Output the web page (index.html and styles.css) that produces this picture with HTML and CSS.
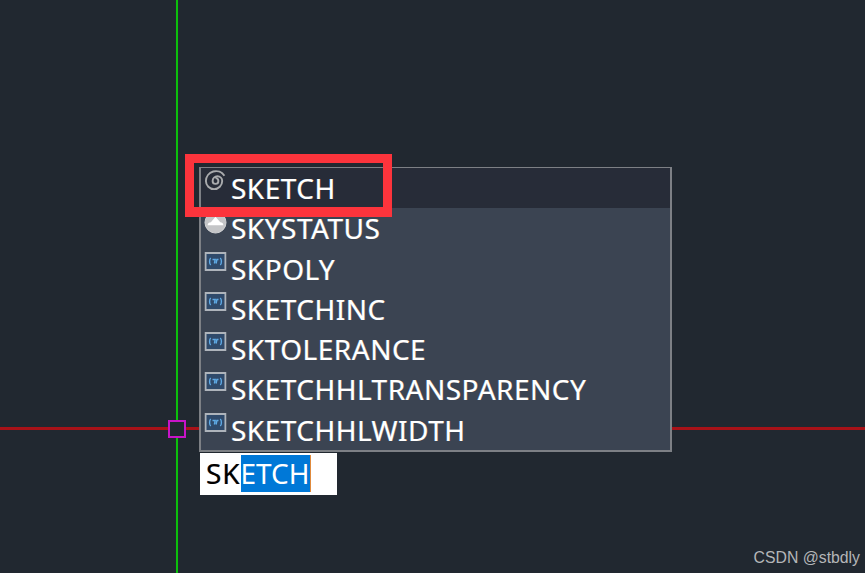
FILE: index.html
```html
<!DOCTYPE html>
<html lang="en">

<head>
    <meta charset="UTF-8">
    <title>SKETCH</title>
    <link rel="stylesheet" href="styles.css">
</head>

<body>
    <div class="canvas">
        <div class="axis-x"></div>
        <div class="axis-y"></div>
        <div class="pickbox"></div>

        <ul class="suggest">
            <li class="suggest-row active">
                <svg class="icon icon-spiral" viewBox="0 0 24 24"><path d="M12 9.500A3 3 0 0 1 15 12.500A3 3 0 0 1 9 12.500A5 5 0 0 1 19 12.500A8.500 8.500 0 0 1 2 12.500A10.500 10.500 0 0 1 21.300 7" fill="none" stroke="#a9abad" stroke-width="2"/></svg>
                <span>SKETCH</span>
            </li>
            <li class="suggest-row">
                <svg class="icon icon-cloud" viewBox="0 0 24 24"><circle cx="12" cy="12" r="11" fill="#c4c5c7" stroke="#d4d5d6" stroke-width="1"/><path d="M3.800 14.800c0-1.900 1.500-3.100 3.400-3.100L12 6l5 5.700c1.800 0 3.200 1.200 3.200 3.100z" fill="#ffffff"/></svg>
                <span>SKYSTATUS</span>
            </li>
            <li class="suggest-row">
                <svg class="icon icon-var" viewBox="0 0 22 19"><use href="#var-icon"/></svg>
                <span>SKPOLY</span>
            </li>
            <li class="suggest-row">
                <svg class="icon icon-var" viewBox="0 0 22 19"><use href="#var-icon"/></svg>
                <span>SKETCHINC</span>
            </li>
            <li class="suggest-row">
                <svg class="icon icon-var" viewBox="0 0 22 19"><use href="#var-icon"/></svg>
                <span>SKTOLERANCE</span>
            </li>
            <li class="suggest-row">
                <svg class="icon icon-var" viewBox="0 0 22 19"><use href="#var-icon"/></svg>
                <span>SKETCHHLTRANSPARENCY</span>
            </li>
            <li class="suggest-row">
                <svg class="icon icon-var" viewBox="0 0 22 19"><use href="#var-icon"/></svg>
                <span>SKETCHHLWIDTH</span>
            </li>
        </ul>

        <div class="highlight-box"></div>

        <div class="cmd-input"><span class="typed">SK</span><span class="selected">ETCH</span></div>

        <div class="watermark">CSDN @stbdly</div>
    </div>

    <svg class="defs" width="0" height="0">
        <symbol id="var-icon" viewBox="0 0 22 19">
            <rect x="1" y="1" width="20" height="17" fill="#2f4a6b" stroke="#aeb4bb" stroke-width="2"/>
            <path d="M6.300 6c-1.600 1-1.600 6 0 7M15.700 6c1.600 1 1.600 6 0 7M8 7.500h2.700l-.8 4M11.600 11.500l.8-4h1.600" fill="none" stroke="#5fabe6" stroke-width="1.400"/>
        </symbol>
    </svg>
</body>
</html>
```

FILE: styles.css
```css
html, body {
    margin: 0;
    padding: 0;
}

body {
    width: 865px;
    height: 573px;
    overflow: hidden;
    background-color: #212830;
    font-family: "Noto Sans", "Open Sans", sans-serif;
}

.defs {
    position: absolute;
}

.canvas {
    position: relative;
    width: 865px;
    height: 573px;
    overflow: hidden;
}

/* crosshair */
.axis-x {
    position: absolute;
    left: 0;
    top: 427px;
    width: 865px;
    height: 3px;
    background-color: #a81218;
}

.axis-y {
    position: absolute;
    left: 176px;
    top: 0;
    width: 2px;
    height: 573px;
    background-color: #0cc00c;
}

.pickbox {
    position: absolute;
    left: 168px;
    top: 420px;
    width: 14px;
    height: 14px;
    border: 2px solid #c814c8;
    background-color: #212830;
}

/* autocomplete list */
.suggest {
    position: absolute;
    left: 199px;
    top: 167px;
    width: 469px;
    height: 282px;
    margin: 0;
    padding: 0;
    list-style: none;
    background-color: #3b4452;
    border: 2px solid #7d8085;
    border-top-width: 1px;
    display: flex;
    flex-direction: column;
}

.suggest-row {
    height: 40.300px;
    display: flex;
    align-items: flex-start;
    gap: 4px;
    padding-left: 3px;
    color: #ffffff;
    font-size: 28px;
    letter-spacing: 0.5px;
    line-height: 40px;
    text-shadow: 0.5px 0 rgba(255, 190, 120, 0.45), -0.5px 0 rgba(120, 190, 255, 0.45);
}

.suggest-row.active {
    background-color: #272c38;
}

.icon {
    flex-shrink: 0;
    width: 23px;
}

.icon-spiral {
    height: 23px;
    margin-top: 1px;
}

.icon-cloud {
    height: 23px;
    margin-top: 3px;
}

.icon-var {
    height: 19px;
    margin-top: 3px;
}

.highlight-box {
    position: absolute;
    left: 185px;
    top: 154px;
    width: 189px;
    height: 44px;
    border: 9px solid #fc343c;
    border-bottom-width: 10px;
}

/* command line */
.cmd-input {
    position: absolute;
    left: 200px;
    top: 453px;
    width: 131px;
    height: 42px;
    padding-left: 6px;
    background-color: #ffffff;
    color: #000000;
    font-size: 28px;
    line-height: 41px;
    display: flex;
    align-items: flex-start;
}

.typed {
    letter-spacing: 0.9px;
    text-shadow: 0.5px 0 rgba(230, 140, 40, 0.5), -0.5px 0 rgba(40, 120, 230, 0.5);
}

.selected {
    height: 37px;
    line-height: 37px;
    margin-top: 2px;
    background-color: #0078d7;
    color: #ffffff;
    border-right: 1px solid #e08a3c;
}

.watermark {
    position: absolute;
    right: 5px;
    bottom: 6px;
    color: #b4b6b8;
    font-family: "Liberation Sans", Arial, sans-serif;
    font-size: 15.800px;
}
```
